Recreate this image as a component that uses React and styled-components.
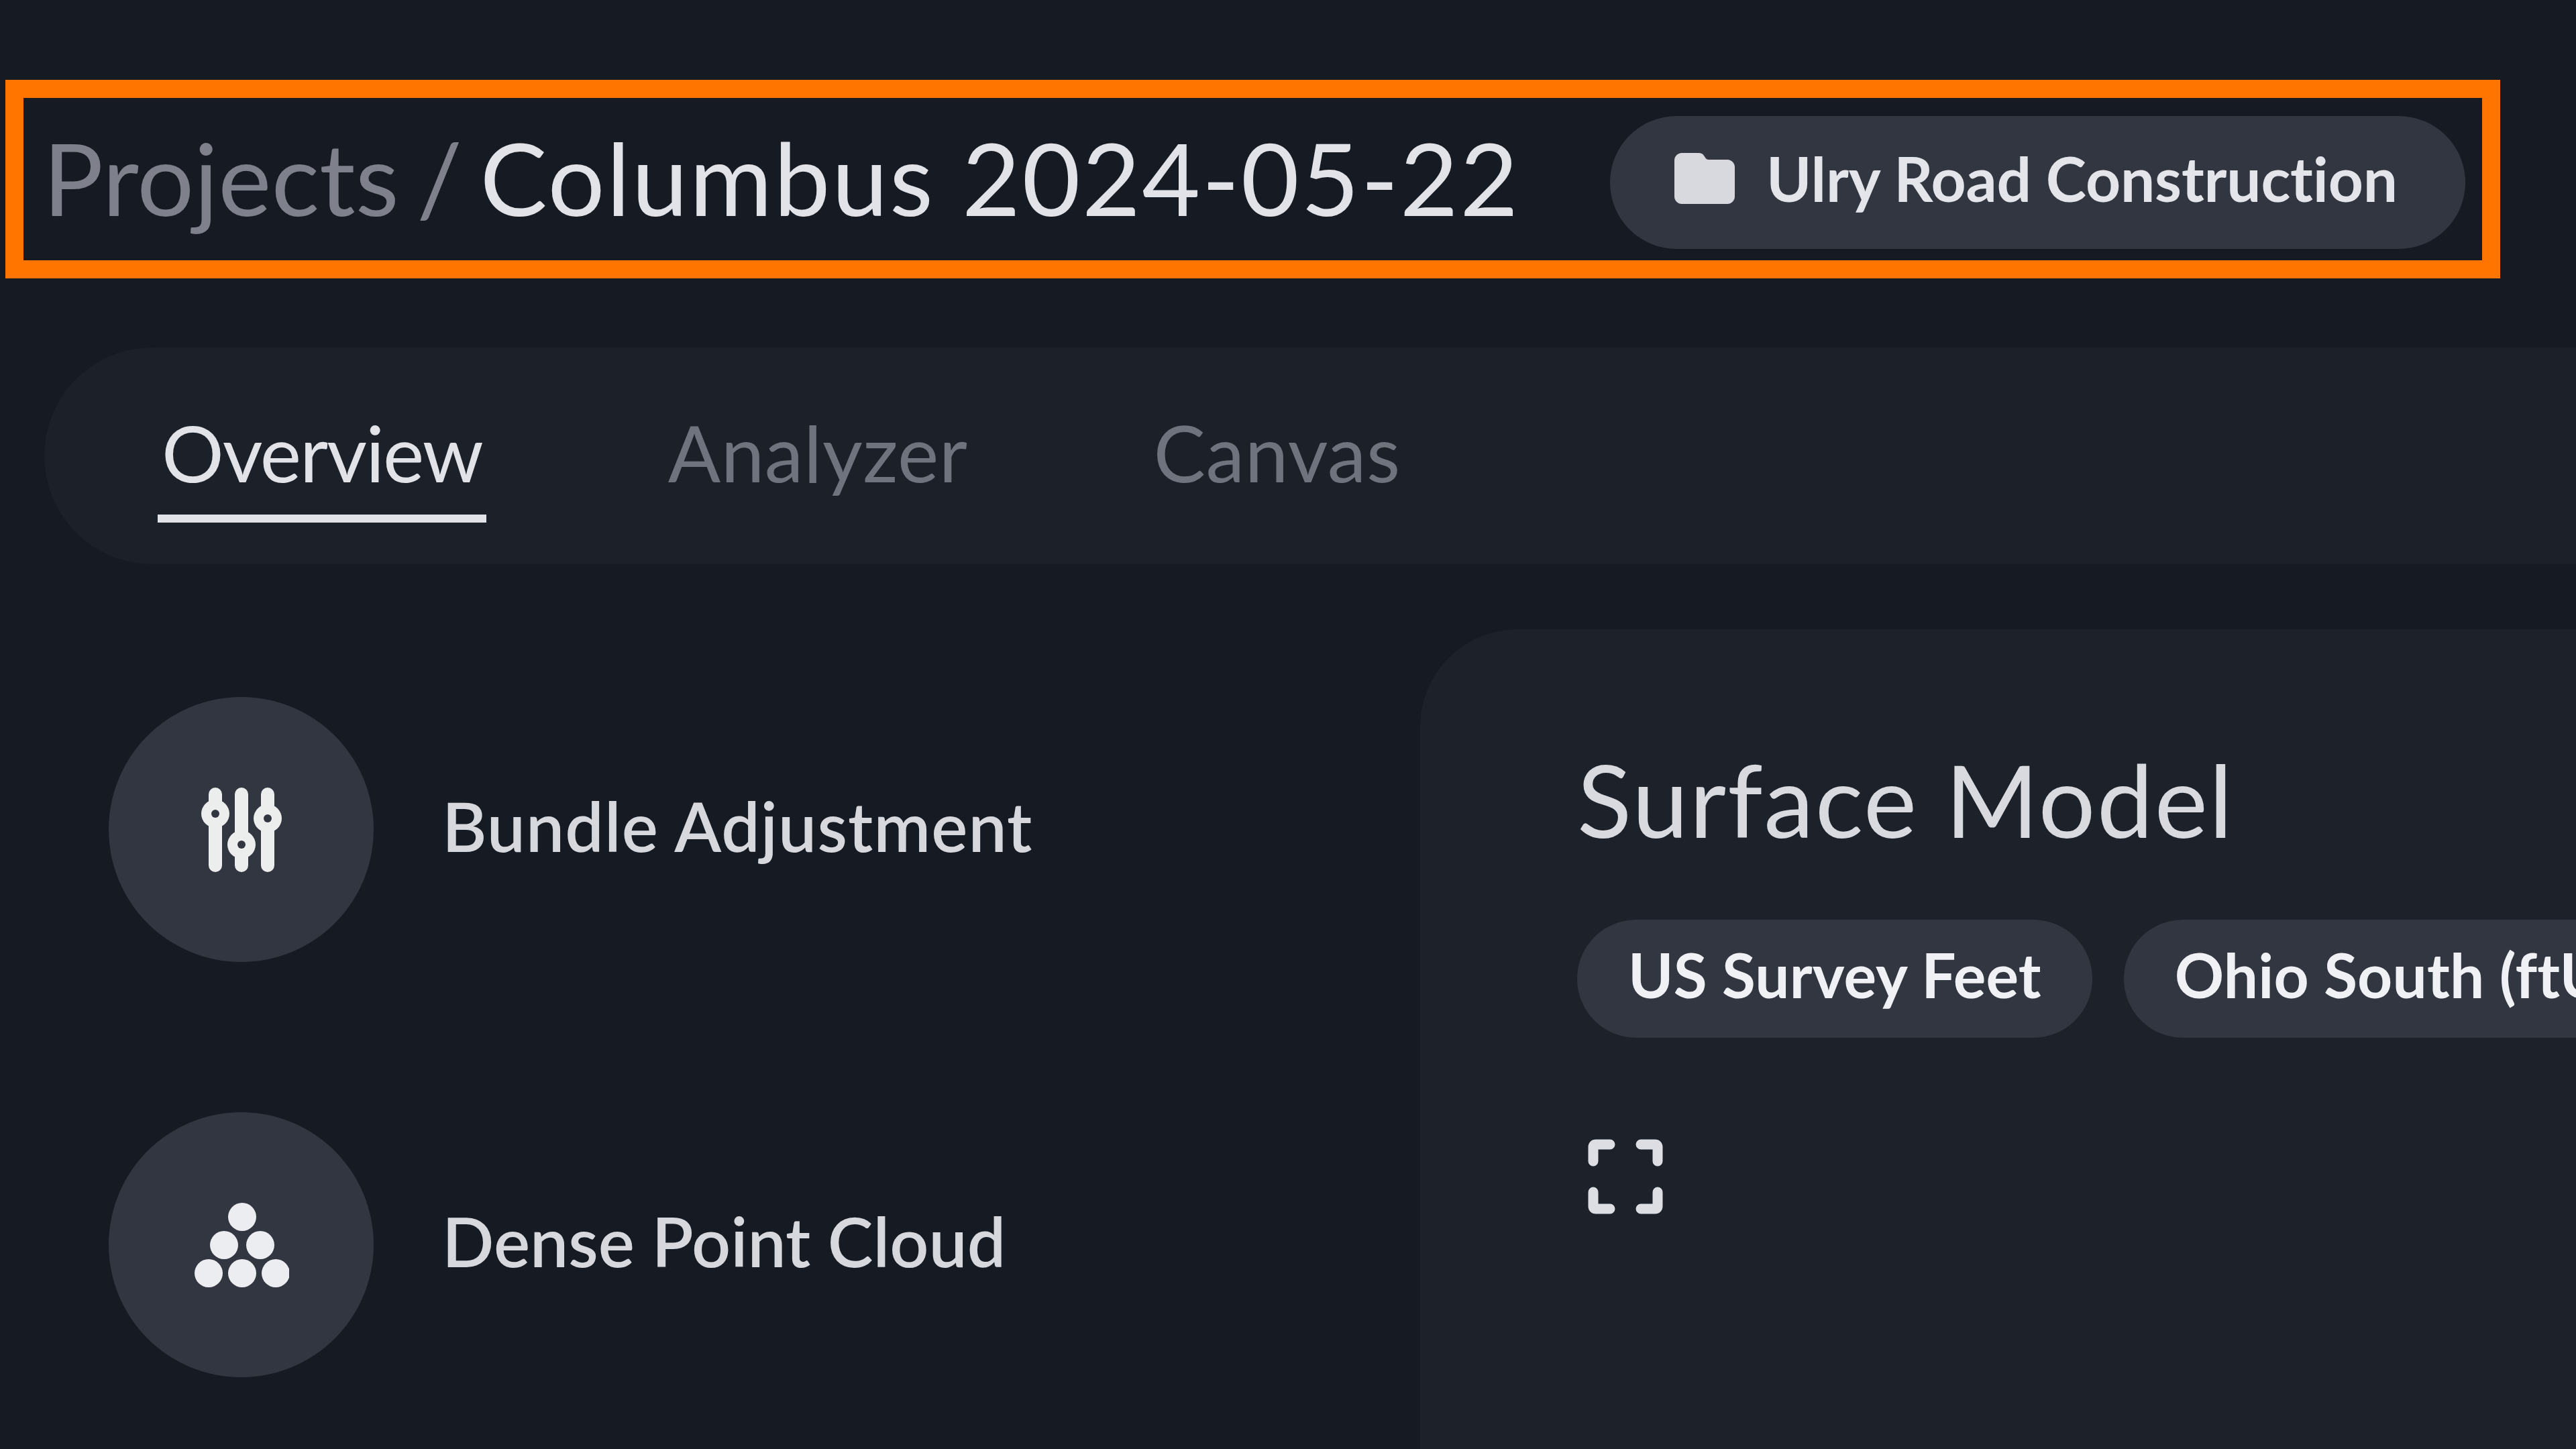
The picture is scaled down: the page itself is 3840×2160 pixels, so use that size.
import React from 'react'
import styled, { createGlobalStyle } from 'styled-components'

const GlobalStyle = createGlobalStyle`
  html, body {
    margin: 0;
    padding: 0;
    background: #161a22;
  }
`

const Page = styled.div`
  position: relative;
  width: 3840px;
  height: 2160px;
  overflow: hidden;
  background: #161a22;
  font-family: "Lato", "Noto Sans", sans-serif;
  color: #e1e3e8;
`

const Header = styled.header`
  display: flex;
  align-items: center;
  height: 296px;
  margin-top: 119px;
  padding-left: 64px;
`

const Crumbs = styled.h1`
  margin: 0 0 6px;
  width: 2336px;
  flex: none;
  font-size: 150px;
  font-weight: 400;
  letter-spacing: 2.4px;
  white-space: nowrap;
  color: #e1e3e8;

  span {
    letter-spacing: 0;
    word-spacing: -12px;
    color: #7e818c;
  }
`

const ProjectPill = styled.div`
  display: flex;
  align-items: center;
  gap: 47px;
  width: 1275px;
  height: 198px;
  margin-top: 10px;
  box-sizing: border-box;
  padding-left: 96px;
  border-radius: 99px;
  background: #323641;
  font-size: 91px;
  font-weight: 700;
  letter-spacing: -0.2px;
  white-space: nowrap;
  color: #e4e5ea;

  span {
    padding-bottom: 14px;
  }

  svg {
    margin-bottom: 12px;
  }
`

/* the orange annotation drawn on top of the screenshot */
const Highlight = styled.div`
  position: absolute;
  left: 8px;
  top: 119px;
  width: 3719px;
  height: 296px;
  box-sizing: border-box;
  border: 27px solid #ff7500;
  pointer-events: none;
`

const TabBar = styled.nav`
  display: flex;
  align-items: stretch;
  gap: 265px;
  height: 323px;
  margin: 103px 0 0 66px;
  padding-left: 169px;
  border-radius: 161px 0 0 161px;
  background: #1c2029;
`

const Tab = styled.div`
  display: flex;
  align-items: center;
  position: relative;
  box-sizing: border-box;
  padding: 0 6px 10px;
  font-size: 116px;
  font-weight: 400;
  letter-spacing: ${(p) => p.$spacing || 0}px;
  color: ${(p) => (p.$active ? '#e1e3e8' : '#6f737e')};

  &::after {
    content: '';
    display: ${(p) => (p.$active ? 'block' : 'none')};
    position: absolute;
    left: 0;
    right: 0;
    bottom: 62px;
    height: 12px;
    background: #e1e3e8;
  }
`

const Body = styled.div`
  display: grid;
  grid-template-columns: 2051px 1fr;
  margin: 97px 0 0 66px;
`

const ItemList = styled.div`
  display: flex;
  flex-direction: column;
  gap: 224px;
  padding: 101px 0 0 96px;
`

const Item = styled.div`
  display: flex;
  align-items: center;
  gap: 102px;
`

const ItemLabel = styled.span`
  padding-bottom: 13px;
  font-size: 102px;
  font-weight: 600;
  letter-spacing: ${(p) => p.$spacing || 0}px;
  color: #d6d8de;
  white-space: nowrap;
`

const IconCircle = styled.div`
  display: flex;
  align-items: center;
  justify-content: center;
  flex: none;
  width: 395px;
  height: 395px;
  border-radius: 50%;
  background: #323641;

  svg {
    display: block;
  }
`

const Card = styled.section`
  height: 1400px;
  padding: 163px 0 0 234px;
  border-radius: 145px 0 0 0;
  background: #1d2129;
`

const CardTitle = styled.h2`
  margin: 0;
  font-size: 150px;
  font-weight: 400;
  letter-spacing: 2px;
  line-height: 180px;
  color: #d8dae0;
  white-space: nowrap;
`

const ChipRow = styled.div`
  display: flex;
  gap: 47px;
  margin-top: 90px;
`

const Chip = styled.div`
  display: flex;
  align-items: center;
  flex: none;
  height: 176px;
  box-sizing: border-box;
  padding: 0 76px 14px;
  border-radius: 88px;
  background: #323641;
  font-size: 91px;
  font-weight: 700;
  letter-spacing: 0.15px;
  white-space: nowrap;
  color: #f0f1f4;
`

const ExpandButton = styled.div`
  margin: 151px 0 0 16px;
  color: #dcdee3;

  svg {
    display: block;
  }
`

function FolderIcon() {
  return (
    <svg width="90" height="76" viewBox="0 0 90 76" fill="#d8d9de">
      <path d="M11 0h25c4 0 6 1 8 4l2 3c1 2 3 3 5 3h28c6 0 11 5 11 11v44c0 6-5 11-11 11H11C5 76 0 71 0 65V11C0 5 5 0 11 0z" />
    </svg>
  )
}

function SlidersIcon() {
  return (
    <svg width="122" height="126" viewBox="0 0 122 126">
      <g stroke="#eceded" strokeWidth="20" strokeLinecap="round">
        <path d="M22 10v106M61 10v106M100 10v106" />
      </g>
      <g fill="#eceded">
        <circle cx="22" cy="39" r="21" />
        <circle cx="61" cy="85" r="21" />
        <circle cx="100" cy="46" r="21" />
      </g>
      <g fill="#323641">
        <circle cx="22" cy="39" r="6" />
        <circle cx="61" cy="85" r="6" />
        <circle cx="100" cy="46" r="6" />
      </g>
    </svg>
  )
}

function DotsIcon() {
  return (
    <svg width="142" height="126" viewBox="0 0 142 126" fill="#ecedf0">
      <circle cx="72" cy="21" r="21" />
      <circle cx="45" cy="63" r="21" />
      <circle cx="99" cy="63" r="21" />
      <circle cx="22" cy="105" r="21" />
      <circle cx="72" cy="105" r="21" />
      <circle cx="122" cy="105" r="21" />
    </svg>
  )
}

function ExpandIcon() {
  return (
    <svg width="112" height="112" viewBox="0 0 112 112" fill="none" stroke="currentColor" strokeWidth="15" strokeLinecap="round" strokeLinejoin="round">
      <path d="M8 33V12q0-4 4-4h21" />
      <path d="M79 8h21q4 0 4 4v21" />
      <path d="M8 79v21q0 4 4 4h21" />
      <path d="M79 104h21q4 0 4-4V79" />
    </svg>
  )
}

export default function App() {
  return (
    <Page>
      <GlobalStyle />
      <Header>
        <Crumbs>
          <span>Projects / </span>Columbus 2024-05-22
        </Crumbs>
        <ProjectPill>
          <FolderIcon />
          <span>Ulry Road Construction</span>
        </ProjectPill>
      </Header>
      <Highlight />
      <TabBar>
        <Tab $active $spacing={-2}>Overview</Tab>
        <Tab $spacing={0.5}>Analyzer</Tab>
        <Tab $spacing={0.5}>Canvas</Tab>
      </TabBar>
      <Body>
        <ItemList>
          <Item>
            <IconCircle><SlidersIcon /></IconCircle>
            <ItemLabel $spacing={1.1}>Bundle Adjustment</ItemLabel>
          </Item>
          <Item>
            <IconCircle><DotsIcon /></IconCircle>
            <ItemLabel>Dense Point Cloud</ItemLabel>
          </Item>
        </ItemList>
        <Card>
          <CardTitle>Surface Model</CardTitle>
          <ChipRow>
            <Chip>US Survey Feet</Chip>
            <Chip>Ohio South (ftUS)</Chip>
          </ChipRow>
          <ExpandButton><ExpandIcon /></ExpandButton>
        </Card>
      </Body>
    </Page>
  )
}
